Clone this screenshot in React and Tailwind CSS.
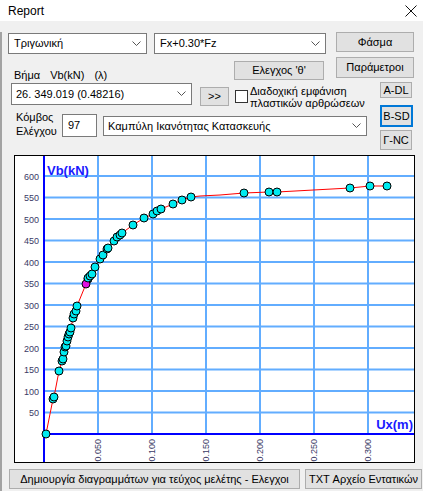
import React from 'react';

const pts = [
  [46, 434], [53, 399], [54, 397], [59, 371], [62, 361], [63, 359], [64, 352], [65, 347],
  [66, 346], [67, 341], [68, 337], [69, 334], [70, 332], [71, 328], [73, 318], [74, 314],
  [76, 311], [77, 306], [86, 284], [88, 278], [90, 276], [92, 274], [95, 267], [100, 259],
  [103, 255], [107, 249], [108, 248], [114, 241], [117, 237], [120, 235], [122, 233],
  [133, 225], [144, 218], [153, 214], [157, 211], [161, 209], [173, 204], [182, 200],
  [191, 197], [244, 193], [269, 192], [277, 192], [350, 188], [370, 186], [387, 186],
];

const linePts = [
  ...pts.slice(0, 39),
  [200, 196], [220, 195],
  ...pts.slice(39),
];

function Chevron() {
  return (
    <svg width="9" height="6" viewBox="0 0 9 6" className="shrink-0">
      <path d="M0.5 0.5 L4.5 4.5 L8.5 0.5" fill="none" stroke="#555" strokeWidth="1" />
    </svg>
  );
}

function Combo({ text, className }) {
  return (
    <div className={`flex items-center justify-between bg-white border border-[#7a7a7a] pl-[4px] pr-[5px] ${className}`}>
      <span className="whitespace-nowrap">{text}</span>
      <Chevron />
    </div>
  );
}

function Btn({ children, className }) {
  return (
    <div className={`flex items-center justify-center bg-[#e1e1e1] border border-[#adadad] whitespace-nowrap ${className}`}>
      {children}
    </div>
  );
}

function Chart() {
  const xs = [83, 137, 191, 245, 299, 353];
  const xl = ['0.050', '0.100', '0.150', '0.200', '0.250', '0.300'];
  const ys = [600, 550, 500, 450, 400, 350, 300, 250, 200, 150, 100, 50];
  const yy = (v) => 278 - v * 0.43;
  const rel = (p) => [p[0] - 15, p[1] - 156];
  return (
    <div className="ml-[14px] mt-[5px] w-[401px] h-[308px] border border-black bg-white">
      <svg width="399" height="306" viewBox="0 0 399 306" className="block">
        {xs.map((x) => (
          <line key={x} x1={x} y1="0" x2={x} y2="278" stroke="#62adff" strokeWidth="2" />
        ))}
        {ys.map((v) => (
          <line key={v} x1="29" y1={yy(v)} x2="399" y2={yy(v)} stroke="#62adff" strokeWidth="2" />
        ))}
        <line x1="29" y1="0" x2="29" y2="306" stroke="#0000ff" strokeWidth="2" />
        <line x1="29" y1="278" x2="399" y2="278" stroke="#0000ff" strokeWidth="2" />
        {ys.map((v) => (
          <text key={v} x="24" y={yy(v) + 3.5} textAnchor="end" fontSize="9" fill="#3a3a66" fontFamily="Liberation Sans, Arial, sans-serif">
            {v}
          </text>
        ))}
        {xs.map((x, i) => (
          <text key={x} transform={`translate(${x + 2.5},305.5) rotate(-90)`} fontSize="9" fill="#3a3a66" fontFamily="Liberation Sans, Arial, sans-serif">
            {xl[i]}
          </text>
        ))}
        <text x="32" y="19" fontSize="13" fontWeight="bold" fill="#1a1aff" fontFamily="Liberation Sans, Arial, sans-serif">Vb(kN)</text>
        <text x="398" y="273" textAnchor="end" fontSize="13" fontWeight="bold" fill="#1a1aff" fontFamily="Liberation Sans, Arial, sans-serif">Ux(m)</text>
        <polyline points={linePts.map((p) => rel(p).join(',')).join(' ')} fill="none" stroke="#ff0000" strokeWidth="1" />
        <circle cx={88 - 15} cy={279 - 156} r="4" fill="#222" stroke="#000" />
        {pts.map((p, i) => {
          const [x, y] = rel(p);
          return (
            <circle key={i} cx={x} cy={y} r="4" fill={i === 18 ? '#e010e0' : '#00eaf0'} stroke="#000" strokeWidth="1" />
          );
        })}
      </svg>
    </div>
  );
}

export default function App() {
  return (
    <div className="w-[423px] h-[491px] overflow-hidden bg-[#f0f0f0] text-[11px] text-black font-['Liberation_Sans',Arial,sans-serif]">
      <div className="h-[21px] bg-white flex items-center justify-between pl-[8px] pr-[6px]">
        <span className="text-[12px]">Report</span>
        <svg width="12" height="12" viewBox="0 0 12 12">
          <path d="M0.5 0.5 L11.5 11.5 M11.5 0.5 L0.5 11.5" stroke="#111" strokeWidth="1" />
        </svg>
      </div>

      <div className="border-l-2 border-[#a3a3a3] h-[470px] -ml-0">
        {/* row 1 */}
        <div className="flex items-start mt-[11px] h-[22px]">
          <Combo text="Τριγωνική" className="ml-[6px] mt-[1px] w-[139px] h-[21px] pl-[5px]" />
          <Combo text="Fx+0.30*Fz" className="ml-[7px] mt-[1px] w-[172px] h-[21px] pl-[5px]" />
          <Btn className="ml-[10px] w-[78px] h-[20px]">Φάσμα</Btn>
        </div>

        {/* row 2 */}
        <div className="flex items-start h-[28px]">
          <div className="ml-[12px] w-[220px] mt-[15px] flex gap-[10px] whitespace-nowrap leading-[12px]">
            <span>Βήμα</span>
            <span>Vb(kN)</span>
            <span>(λ)</span>
          </div>
          <Btn className="mt-[7px] w-[90px] h-[19px]">Ελεγχος 'θ'</Btn>
          <Btn className="ml-[12px] mt-[3px] w-[78px] h-[21px]">Παράμετροι</Btn>
        </div>

        {/* row 3 */}
        <div className="flex items-start h-[23px]">
          <Combo text="26. 349.019 (0.48216)" className="ml-[9px] mt-[1px] w-[181px] h-[22px] pl-[4px]" />
          <Btn className="ml-[8px] mt-[5px] w-[29px] h-[19px]">&gt;&gt;</Btn>
          <div className="ml-[6px] mt-[8px] w-[13px] h-[13px] bg-white border border-[#333] shrink-0" />
          <div className="ml-[2px] mt-[3px] w-[130px] leading-[12px] whitespace-nowrap">
            <div>Διαδοχική εμφάνιση</div>
            <div>πλαστικών αρθρώσεων</div>
          </div>
          <Btn className="w-[32px] h-[16px]">A-DL</Btn>
        </div>

        {/* row 4 */}
        <div className="flex items-start h-[45px]">
          <div className="ml-[14px] mt-[5px] w-[46px] leading-[14px]">
            <div>Κόμβος</div>
            <div>Ελέγχου</div>
          </div>
          <div className="mt-[9px] w-[35px] h-[23px] bg-white border border-[#7a7a7a] pl-[5px] flex items-center">97</div>
          <Combo text="Καμπύλη Ικανότητας Κατασκευής" className="ml-[6px] mt-[11px] w-[264px] h-[20px] pl-[4px]" />
          <div className="ml-[13px] flex flex-col gap-[3px]">
            <Btn className="w-[33px] h-[22px] !border-2 !border-[#0078d7]">B-SD</Btn>
            <Btn className="w-[32px] h-[20px]">Γ-NC</Btn>
          </div>
        </div>

        <div className="-ml-[2px]">
          <Chart />
        </div>

        <div className="flex mt-[6px]">
          <Btn className="ml-[7px] w-[291px] h-[20px]">Δημιουργία διαγραμμάτων για τεύχος μελέτης - Ελεγχοι</Btn>
          <Btn className="ml-[5px] w-[117px] h-[20px]">TXT Αρχείο Εντατικών</Btn>
        </div>
      </div>
    </div>
  );
}
